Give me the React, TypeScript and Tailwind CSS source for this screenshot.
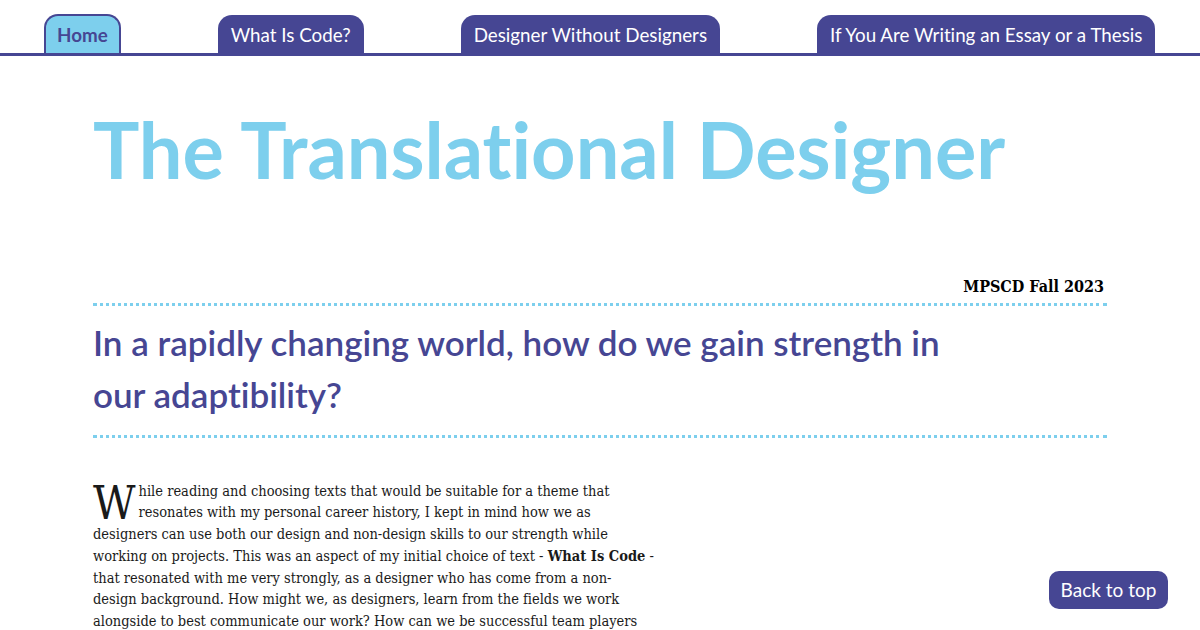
const tabs = [
  { label: 'Home', active: true },
  { label: 'What Is Code?', active: false },
  { label: 'Designer Without Designers', active: false },
  { label: 'If You Are Writing an Essay or a Thesis', active: false },
];

const sans = { fontFamily: "Lato, 'Open Sans', sans-serif" };
const serif = { fontFamily: "'DejaVu Serif Condensed', 'DejaVu Serif', 'Liberation Serif', serif" };

export default function App() {
  return (
    <div className="min-h-[630px] bg-white overflow-hidden relative [font-variant-ligatures:none]" style={sans}>
      <nav className="border-b-[3px] border-[#464693] h-[56px] flex items-end gap-[97px] pl-[44px]">
        {tabs.map((t) =>
          t.active ? (
            <div
              key={t.label}
              className="h-[39px] px-[11px] pt-[2px] flex items-center rounded-t-[14px] border-2 border-b-0 border-[#464693] bg-[#7dcfed] text-[#464693] font-bold text-[18.8px]"
            >
              {t.label}
            </div>
          ) : (
            <div
              key={t.label}
              className="h-[38px] px-[13px] pt-[2px] flex items-center rounded-t-[14px] bg-[#464693] text-white text-[18.8px]"
            >
              {t.label}
            </div>
          ),
        )}
      </nav>

      <main className="max-w-[1014px] mx-auto">
        <h1 className="text-[#7dcfed] font-bold text-[77.5px] leading-none mt-[55px]">The Translational Designer</h1>

        <p className="text-right font-bold text-[16px] leading-[20px] text-black mt-[88px] pr-[3px]" style={serif}>
          MPSCD Fall 2023
        </p>

        <div className="border-t-[3px] border-dotted border-[#7dcfed] mt-[6px]" />

        <h2 className="text-[#464693] font-semibold text-[35px] leading-[52px] max-w-[880px] pt-[10px] pb-[15px]">
          In a rapidly changing world, how do we gain strength in our adaptibility?
        </h2>

        <div className="border-t-[3px] border-dotted border-[#7dcfed]" />

        <p className="max-w-[562px] mt-[43px] text-[14.5px] leading-[21.5px] text-[#1a1a1a]" style={serif}>
          <span className="float-left text-[46px] leading-[38px] mr-[3px] mt-[3px]">W</span>
          hile reading and choosing texts that would be suitable for a theme that resonates with my personal career
          history, I kept in mind how we as designers can use both our design and non-design skills to our strength
          while working on projects. This was an aspect of my initial choice of text - <b>What Is Code</b> - that
          resonated with me very strongly, as a designer who has come from a non-design background. How might we, as
          designers, learn from the fields we work alongside to best communicate our work? How can we be successful
          team players
        </p>
      </main>

      <button className="absolute left-[1049px] top-[571px] w-[119px] h-[38px] rounded-[10px] bg-[#464693] text-white text-[19px]">
        Back to top
      </button>
    </div>
  );
}
